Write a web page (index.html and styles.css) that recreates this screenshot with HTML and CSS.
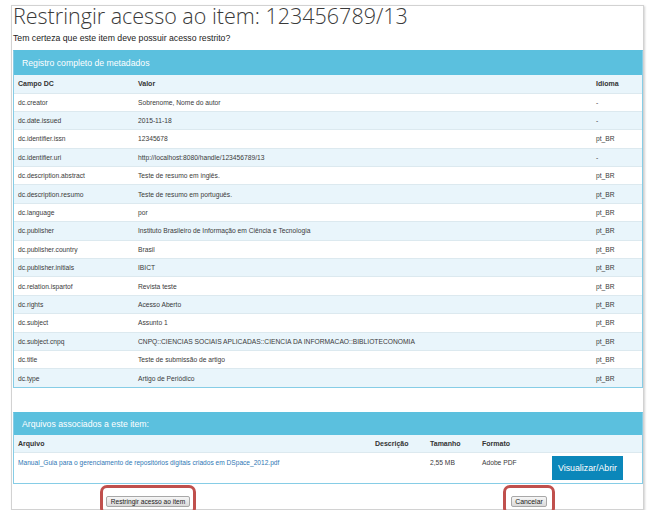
FILE: index.html
```html
<!DOCTYPE html>
<html lang="pt-BR">
<head>
<meta charset="utf-8">
<title>Restringir acesso ao item</title>
<link rel="stylesheet" href="styles.css">
</head>
<body>
<div class="frame">
  <h1 class="title">Restringir acesso ao item: 123456789/13</h1>
  <p class="lead">Tem certeza que este item deve possuir acesso restrito?</p>

  <div class="panel">
    <div class="panel-heading">Registro completo de metadados</div>
    <table class="meta">
      <colgroup><col class="c-field"><col><col class="c-lang"></colgroup>
      <thead>
        <tr><th>Campo DC</th><th>Valor</th><th>Idioma</th></tr>
      </thead>
      <tbody>
        <tr><td>dc.creator</td><td>Sobrenome, Nome do autor</td><td>-</td></tr>
        <tr><td>dc.date.issued</td><td>2015-11-18</td><td>-</td></tr>
        <tr><td>dc.identifier.issn</td><td>12345678</td><td>pt_BR</td></tr>
        <tr><td>dc.identifier.uri</td><td>http://localhost:8080/handle/123456789/13</td><td>-</td></tr>
        <tr><td>dc.description.abstract</td><td>Teste de resumo em inglês.</td><td>pt_BR</td></tr>
        <tr><td>dc.description.resumo</td><td>Teste de resumo em português.</td><td>pt_BR</td></tr>
        <tr><td>dc.language</td><td>por</td><td>pt_BR</td></tr>
        <tr><td>dc.publisher</td><td>Instituto Brasileiro de Informação em Ciência e Tecnologia</td><td>pt_BR</td></tr>
        <tr><td>dc.publisher.country</td><td>Brasil</td><td>pt_BR</td></tr>
        <tr><td>dc.publisher.initials</td><td>IBICT</td><td>pt_BR</td></tr>
        <tr><td>dc.relation.ispartof</td><td>Revista teste</td><td>pt_BR</td></tr>
        <tr><td>dc.rights</td><td>Acesso Aberto</td><td>pt_BR</td></tr>
        <tr><td>dc.subject</td><td>Assunto 1</td><td>pt_BR</td></tr>
        <tr><td>dc.subject.cnpq</td><td>CNPQ::CIENCIAS SOCIAIS APLICADAS::CIENCIA DA INFORMACAO::BIBLIOTECONOMIA</td><td>pt_BR</td></tr>
        <tr><td>dc.title</td><td>Teste de submissão de artigo</td><td>pt_BR</td></tr>
        <tr><td>dc.type</td><td>Artigo de Periódico</td><td>pt_BR</td></tr>
      </tbody>
    </table>
  </div>

  <div class="panel panel-files">
    <div class="panel-heading">Arquivos associados a este item:</div>
    <table class="files">
      <colgroup><col class="f-name"><col class="f-desc"><col class="f-size"><col class="f-fmt"><col></colgroup>
      <thead>
        <tr><th>Arquivo</th><th>Descrição</th><th>Tamanho</th><th>Formato</th><th></th></tr>
      </thead>
      <tbody>
        <tr>
          <td><a class="file-link" href="#">Manual_Guia para o gerenciamento de repositórios digitais criados em DSpace_2012.pdf</a></td>
          <td></td>
          <td>2,55 MB</td>
          <td>Adobe PDF</td>
          <td><a class="btn-view" href="#">Visualizar/Abrir</a></td>
        </tr>
      </tbody>
    </table>
  </div>

  <div class="actions">
    <div class="mark mark-left"><button class="btn" type="button">Restringir acesso ao item</button></div>
    <div class="mark mark-right"><button class="btn" type="button">Cancelar</button></div>
  </div>
</div>
</body>
</html>
```
FILE: styles.css
```css
* { box-sizing: border-box; }

html, body {
  margin: 0;
  padding: 0;
  background: #fff;
}

body {
  font-family: "Liberation Sans", Arial, sans-serif;
  color: #333;
}

.frame {
  margin: 5px 0 0 11px;
  width: 633px;
  border: 1px solid #d2d2d2;
  box-shadow: 1px 1px 2px rgba(0, 0, 0, 0.18);
  padding: 0 0 0 1px;
}

.title {
  margin: 0;
  font-family: "Open Sans", sans-serif;
  font-weight: 300;
  font-size: 21.5px;
  line-height: 20px;
  color: #3a3a3a;
  letter-spacing: 0;
}

.lead {
  margin: 6.5px 0 0 0;
  font-size: 8.7px;
  line-height: 11px;
  color: #222;
}

.panel {
  margin-top: 6.5px;
  border: 1px solid #86cde6;
  border-top-color: #5bc0de;
}

.panel-heading {
  height: 24px;
  background: #5bc0de;
  color: #fff;
  font-size: 8.7px;
  line-height: 24px;
  padding-left: 8px;
}

table {
  width: 100%;
  border-collapse: collapse;
  table-layout: fixed;
}

th, td {
  padding: 0 4px;
  text-align: left;
  white-space: nowrap;
  overflow: hidden;
}

th {
  font-size: 7px;
  font-weight: bold;
  color: #333;
}

td {
  font-size: 6.7px;
  color: #3a3a3a;
}

.meta thead tr { height: 18px; background: #e9f5fb; }
.meta tbody tr { height: 18.4px; border-top: 1px solid #dce9ef; }
.meta tbody tr:nth-child(even) { background: #e9f5fb; }

.c-field { width: 120px; }
.c-lang { width: 50px; }

.panel-files {
  margin-top: 23.5px;
}

.panel-files .panel-heading {
  height: 22px;
  line-height: 22px;
}

.files thead tr { height: 18px; background: #e9f5fb; border-bottom: 1px solid #dce9ef; }
.files tbody tr { height: 30px; }
.files td { vertical-align: top; padding-top: 5px; line-height: 9px; }
.files td:last-child { padding-top: 3px; }

.f-name { width: 357px; }
.f-desc { width: 55px; }
.f-size { width: 52px; }
.f-fmt { width: 69px; }

.file-link {
  color: #2f78b5;
  text-decoration: none;
  font-size: 6.6px;
}

.btn-view {
  display: block;
  width: 71px;
  height: 24px;
  margin-left: 1px;
  background: #0b87ba;
  color: #fff;
  font-size: 8.8px;
  line-height: 24px;
  text-align: center;
  text-decoration: none;
}

.actions {
  height: 25px;
  display: flex;
  justify-content: space-between;
  align-items: flex-start;
  padding: 0 88px 0 87px;
}

.mark {
  height: 30px;
  margin-top: 1px;
  border: 3px solid #c0504d;
  border-radius: 7px;
  display: flex;
  align-items: center;
  justify-content: center;
  padding-top: 3px;
}

.mark-left { width: 96px; }
.mark-right { width: 52px; }

.btn {
  height: 11px;
  margin: 0;
  padding: 0 4px;
  border: 1px solid #a8a8a8;
  border-radius: 2px;
  background: linear-gradient(#f6f6f6, #dadada);
  font-family: "Liberation Sans", Arial, sans-serif;
  font-size: 6.6px;
  line-height: 9px;
  color: #222;
}

.mark-right .btn { padding: 0 3px; font-size: 6.9px; }
```
